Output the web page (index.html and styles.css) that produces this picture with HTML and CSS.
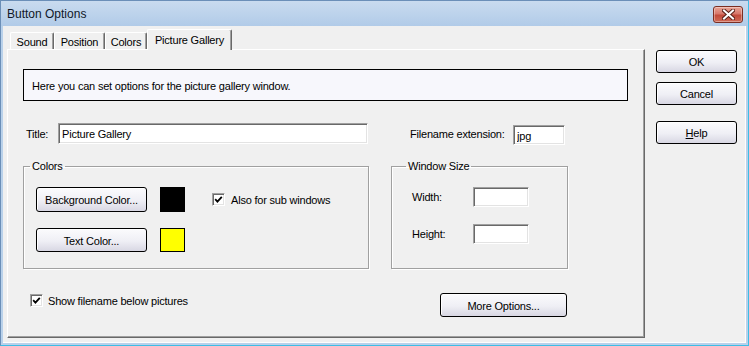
FILE: index.html
```html
<!DOCTYPE html>
<html lang="en">
<head>
    <meta charset="UTF-8">
    <meta name="viewport" content="width=device-width, initial-scale=1.0">
    <title>Button Options</title>
    <link rel="stylesheet" href="styles.css">
</head>
<body>
    <div class="window">
        <div class="titlebar">
            <span class="title">Button Options</span>
            <button class="close" aria-label="Close">
                <svg width="13" height="11" viewBox="0 0 13 11">
                    <path d="M2 1.5 L11 9.5 M11 1.5 L2 9.5" stroke="#5a2118" stroke-width="4" stroke-linecap="square"/>
                    <path d="M2 1.5 L11 9.5 M11 1.5 L2 9.5" stroke="#fff" stroke-width="2" stroke-linecap="square"/>
                </svg>
            </button>
        </div>

        <div class="client">
            <div class="tab-area">
                <div class="tabs">
                    <div class="tab tab-sound">Sound</div>
                    <div class="tab tab-position">Position</div>
                    <div class="tab tab-colors">Colors</div>
                    <div class="tab tab-gallery active">Picture Gallery</div>
                </div>

                <div class="panel">
                    <div class="info">Here you can set options for the picture gallery window.</div>

                    <div class="title-row">
                        <label class="lbl-title">Title:</label>
                        <input type="text" class="field field-title" value="Picture Gallery">
                        <label class="lbl-ext">Filename extension:</label>
                        <input type="text" class="field field-ext" value="jpg">
                    </div>

                    <div class="groups">
                        <fieldset class="group group-colors">
                            <legend>Colors</legend>
                            <div class="color-row">
                                <button class="btn btn-color">Background Color...</button>
                                <span class="swatch swatch-black"></span>
                                <label class="check check-sub">
                                    <span class="box">
                                        <svg width="9" height="9" viewBox="0 0 9 9"><polyline points="1.2,4.2 3.4,6.6 7.8,1.8" fill="none" stroke="#000" stroke-width="1.8"/></svg>
                                    </span>
                                    Also for sub windows
                                </label>
                            </div>
                            <div class="color-row second">
                                <button class="btn btn-color short">Text Color...</button>
                                <span class="swatch swatch-yellow short"></span>
                            </div>
                        </fieldset>

                        <fieldset class="group group-size">
                            <legend>Window Size</legend>
                            <div class="size-row">
                                <label class="lbl-size">Width:</label>
                                <input type="text" class="field field-size">
                            </div>
                            <div class="size-row second">
                                <label class="lbl-size">Height:</label>
                                <input type="text" class="field field-size">
                            </div>
                        </fieldset>
                    </div>

                    <div class="bottom-row">
                        <label class="check check-show">
                            <span class="box">
                                <svg width="9" height="9" viewBox="0 0 9 9"><polyline points="1.2,4.2 3.4,6.6 7.8,1.8" fill="none" stroke="#000" stroke-width="1.8"/></svg>
                            </span>
                            Show filename below pictures
                        </label>
                        <button class="btn btn-more">More Options...</button>
                    </div>
                </div>
            </div>

            <div class="side-buttons">
                <button class="btn btn-side">OK</button>
                <button class="btn btn-side">Cancel</button>
                <button class="btn btn-side btn-help"><u>H</u>elp</button>
            </div>
        </div>
    </div>
</body>
</html>
```

FILE: styles.css
```css
/* General styles */
* {
    box-sizing: border-box;
    margin: 0;
    padding: 0;
}

body {
    width: 749px;
    height: 346px;
    overflow: hidden;
    font-family: "Liberation Sans", Arial, sans-serif;
    font-size: 11px;
    letter-spacing: -0.2px;
    color: #000;
}

.window {
    width: 749px;
    height: 346px;
    display: flex;
    flex-direction: column;
    background: #b9d1ea;
    border: 1px solid #6b8fb8;
    border-bottom-color: #3cbde6;
    border-right-color: #3cbde6;
}

/* Title bar */
.titlebar {
    height: 25px;
    display: flex;
    align-items: center;
    justify-content: space-between;
    padding: 0 5px 0 6px;
    background: linear-gradient(to bottom, #c9dbef, #b1cbe8);
}

.title {
    font-size: 12px;
    letter-spacing: 0;
    color: #101828;
    margin-top: 1px;
}

.close {
    width: 30px;
    height: 17px;
    margin-top: 2px;
    display: flex;
    align-items: center;
    justify-content: center;
    border: 1px solid #7b2e22;
    border-radius: 3px;
    background: linear-gradient(to bottom, #e9a597 0%, #d7776a 45%, #c24a3a 55%, #cf6a55 100%);
    box-shadow: inset 0 0 0 1px rgba(255, 255, 255, 0.35);
}

/* Client area */
.client {
    flex: 1;
    display: flex;
    margin: 0 2px 2px 2px;
    padding: 3px 0 0 4px;
    background: #f0f0f0;
    border-bottom: 1px solid #fdfdfd;
    border-right: 1px solid #fdfdfd;
}

.tab-area {
    width: 638px;
    display: flex;
    flex-direction: column;
}

.tabs {
    height: 20px;
    display: flex;
    align-items: flex-end;
    padding-left: 3px;
    position: relative;
    z-index: 1;
}

.tab {
    height: 17px;
    display: flex;
    align-items: center;
    justify-content: center;
    background: #f0f0f0;
    border-top: 1px solid #fff;
    border-left: 1px solid #fff;
    border-right: 1px solid #696969;
    border-radius: 2px 2px 0 0;
    box-shadow: inset -1px 0 0 #a0a0a0;
    padding-top: 1px;
}

.tab-sound { width: 44px; }
.tab-position { width: 51px; }
.tab-colors { width: 42px; }

.tab-gallery {
    width: 85px;
    height: 21px;
    margin-bottom: -1px;
    padding-bottom: 2px;
}

.panel {
    height: 289px;
    padding: 19px 0 0 15px;
    background: #f0f0f0;
    border-top: 1px solid #fff;
    border-left: 1px solid #fff;
    border-right: 1px solid #696969;
    border-bottom: 1px solid #696969;
    box-shadow: inset -1px -1px 0 #a0a0a0;
}

.info {
    width: 605px;
    height: 32px;
    display: flex;
    align-items: center;
    padding: 1px 0 0 8px;
    border: 1px solid #000;
    background: #f7f7fc;
}

/* Title row */
.title-row {
    display: flex;
    align-items: center;
    margin-top: 22px;
    height: 21px;
    padding-left: 3px;
}

.lbl-title { width: 32px; }

.lbl-ext {
    width: 103px;
    margin-left: 42px;
}

.field {
    height: 21px;
    font-family: inherit;
    font-size: 11px;
    letter-spacing: -0.2px;
    padding: 1px 3px 0;
    background: #fff;
    border: 1px solid;
    border-color: #a0a0a0 #fff #fff #a0a0a0;
    box-shadow: inset 1px 1px 0 #696969, inset -1px -1px 0 #e3e3e3;
    outline: none;
}

.field-title { width: 310px; }

.field-ext {
    width: 52px;
    height: 20px;
    margin-top: 3px;
}

/* Group boxes */
.groups {
    display: flex;
    margin-top: 16px;
}

.group {
    height: 109px;
    border: 1px solid #a0a0a0;
    box-shadow: inset 1px 1px 0 #fff, 1px 1px 0 #fff;
    padding: 14px 0 0 12px;
}

.group legend {
    margin-left: -6px;
    padding: 0 2px;
    line-height: 13px;
}

.group-colors { width: 346px; }

.group-size {
    width: 177px;
    margin-left: 22px;
    padding-left: 20px;
}

.color-row {
    display: flex;
    align-items: center;
}

.color-row.second { margin-top: 16px; }

.swatch {
    width: 25px;
    height: 25px;
    margin-left: 13px;
    border: 1px solid #000;
}

.swatch-black { background: #000; }
.swatch-yellow { background: #ffff00; }
.swatch.short { height: 24px; }

.size-row {
    display: flex;
    align-items: center;
}

.size-row.second { margin-top: 17px; }

.lbl-size { width: 61px; }

.field-size {
    width: 56px;
    height: 20px;
}

/* Buttons */
.btn {
    font-family: inherit;
    font-size: 11px;
    letter-spacing: -0.2px;
    color: #000;
    border: 1px solid #000;
    border-radius: 3px;
    background: linear-gradient(to bottom, #fbfbfd 0%, #efeff5 55%, #d8d7e3 100%);
    box-shadow: inset 1px 1px 0 #fff;
    padding-top: 1px;
}

.btn-color {
    width: 111px;
    height: 25px;
}

.btn-color.short { height: 24px; }

.btn-side {
    width: 81px;
    height: 23px;
}

.btn-side + .btn-side { margin-top: 9px; }
.btn-side.btn-help { margin-top: 16px; }

.btn-more {
    width: 127px;
    height: 24px;
    margin-left: auto;
}

/* Checkboxes */
.check {
    display: flex;
    align-items: center;
}

.check .box {
    width: 13px;
    height: 13px;
    margin-right: 6px;
    display: flex;
    align-items: center;
    justify-content: center;
    background: #fff;
    border: 1px solid;
    border-color: #a0a0a0 #fff #fff #a0a0a0;
    box-shadow: inset 1px 1px 0 #696969, inset -1px -1px 0 #e3e3e3;
}

.check-sub { margin-left: 27px; }

.bottom-row {
    width: 544px;
    display: flex;
    align-items: flex-start;
    margin-top: 24px;
    padding-left: 7px;
}

.check-show { margin-top: 1px; }

.check-show .box { margin-right: 5px; }

.side-buttons {
    display: flex;
    flex-direction: column;
    margin: 21px 0 0 11px;
}
```
